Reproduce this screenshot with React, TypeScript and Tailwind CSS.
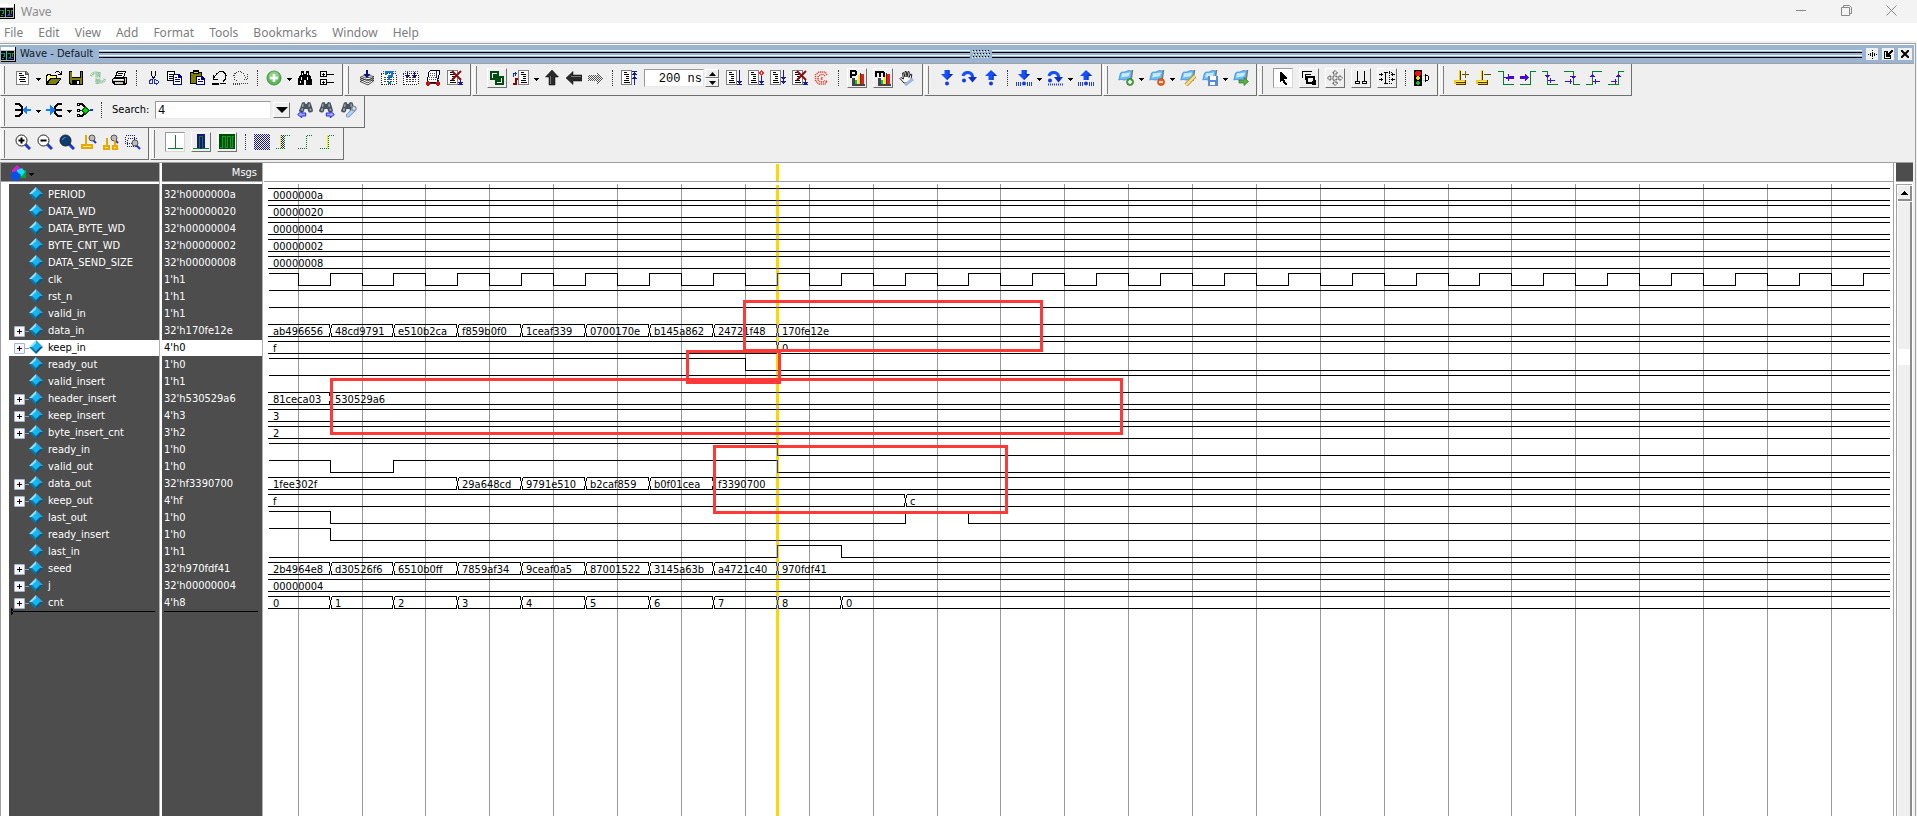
import { useState } from "react";
import type { ReactNode } from "react";

/* ------------------------------------------------------------------ */
/* Signals                                                             */
/* ------------------------------------------------------------------ */

type Signal = {
  name: string;
  value: string;
  expandable?: boolean;
  // Bus: [edge index, text] pairs; index -1 is the start of the view.
  bus?: [number, string][];
  // Bit: initial level followed by the x edges at which it toggles.
  bit?: { start: 0 | 1; toggles: number[] };
};

const ROW = 17;
const PERIOD = 63.88;
const FALL0 = 34.2;
const RISE0 = 66.1;
const FAR = 6000;

const rise = (n: number) => Math.floor(RISE0 + PERIOD * n);
const fall = (n: number) => Math.floor(FALL0 + PERIOD * n);

const clockToggles: number[] = [];
for (let n = 0; n < 90; n++) clockToggles.push(fall(n), rise(n));

const sequence = (words: string): [number, string][] =>
  words.split(" ").map((w, i) => [i - 1, w]);

const signals: Signal[] = [
  { name: "PERIOD", value: "32'h0000000a", bus: [[-1, "0000000a"]] },
  { name: "DATA_WD", value: "32'h00000020", bus: [[-1, "00000020"]] },
  { name: "DATA_BYTE_WD", value: "32'h00000004", bus: [[-1, "00000004"]] },
  { name: "BYTE_CNT_WD", value: "32'h00000002", bus: [[-1, "00000002"]] },
  { name: "DATA_SEND_SIZE", value: "32'h00000008", bus: [[-1, "00000008"]] },
  { name: "clk", value: "1'h1", bit: { start: 1, toggles: clockToggles } },
  { name: "rst_n", value: "1'h1", bit: { start: 1, toggles: [] } },
  { name: "valid_in", value: "1'h1", bit: { start: 1, toggles: [] } },
  {
    name: "data_in",
    value: "32'h170fe12e",
    expandable: true,
    bus: sequence("ab496656 48cd9791 e510b2ca f859b0f0 1ceaf339 0700170e b145a862 24721f48 170fe12e"),
  },
  { name: "keep_in", value: "4'h0", expandable: true, bus: [[-1, "f"], [7, "0"]] },
  { name: "ready_out", value: "1'h0", bit: { start: 1, toggles: [fall(7)] } },
  { name: "valid_insert", value: "1'h1", bit: { start: 1, toggles: [] } },
  { name: "header_insert", value: "32'h530529a6", expandable: true, bus: sequence("81ceca03 530529a6") },
  { name: "keep_insert", value: "4'h3", expandable: true, bus: [[-1, "3"]] },
  { name: "byte_insert_cnt", value: "3'h2", expandable: true, bus: [[-1, "2"]] },
  { name: "ready_in", value: "1'h0", bit: { start: 1, toggles: [rise(7)] } },
  { name: "valid_out", value: "1'h0", bit: { start: 1, toggles: [rise(0), rise(1), rise(7)] } },
  {
    name: "data_out",
    value: "32'hf3390700",
    expandable: true,
    bus: [[-1, "1fee302f"], [2, "29a648cd"], [3, "9791e510"], [4, "b2caf859"], [5, "b0f01cea"], [6, "f3390700"]],
  },
  { name: "keep_out", value: "4'hf", expandable: true, bus: [[-1, "f"], [9, "c"]] },
  { name: "last_out", value: "1'h0", bit: { start: 1, toggles: [rise(0), rise(9), rise(10)] } },
  { name: "ready_insert", value: "1'h0", bit: { start: 1, toggles: [rise(0)] } },
  { name: "last_in", value: "1'h1", bit: { start: 0, toggles: [rise(7), rise(8)] } },
  {
    name: "seed",
    value: "32'h970fdf41",
    expandable: true,
    bus: sequence("2b4964e8 d30526f6 6510b0ff 7859af34 9ceaf0a5 87001522 3145a63b a4721c40 970fdf41"),
  },
  { name: "j", value: "32'h00000004", expandable: true, bus: [[-1, "00000004"]] },
  { name: "cnt", value: "4'h8", expandable: true, bus: sequence("0 1 2 3 4 5 6 7 8 0") },
];

function tracePath(s: Signal, top: number): string {
  const hi = top + 1.5;
  const lo = top + 13.5;
  if (s.bit) {
    let level = s.bit.start;
    let d = `M5 ${level ? hi : lo}`;
    for (const x of s.bit.toggles) {
      level = level ? 0 : 1;
      d += `H${x + 0.5}V${level ? hi : lo}`;
    }
    return d + `H${FAR}`;
  }
  const bus = s.bus ?? [];
  let d = "";
  bus.forEach(([n], i) => {
    const last = i === bus.length - 1;
    const from = n < 0 ? 4 : rise(n) + 1.5;
    const to = last ? FAR : rise(bus[i + 1][0]) - 0.5;
    d += `M${from} ${hi}H${to}M${from} ${lo}H${to}`;
    if (n >= 0) d += `M${from} ${hi}v3l-1 1v4l1 1v3`;
    if (!last) d += `M${to} ${hi}v3l1 1v4l-1 1v3`;
  });
  return d;
}

function Traces({ stroke }: { stroke: string }) {
  return (
    <g fill="none" stroke={stroke} shapeRendering="crispEdges">
      {signals.map((s, i) => (
        <path key={s.name} d={tracePath(s, 3 + i * ROW)} />
      ))}
    </g>
  );
}

const marks = [
  { x: 66, y: 194, w: 793, h: 57 },
  { x: 422, y: 166, w: 95, h: 34 },
  { x: 479, y: 116, w: 300, h: 52 },
  { x: 449, y: 261, w: 295, h: 69 },
];

function WaveCanvas() {
  const grid = Array.from({ length: 90 }, (_, n) => fall(n));
  return (
    <svg className="mr-[3px] min-w-0 flex-1" role="img" aria-label="Waveforms" width="100%">
      <defs>
        <clipPath id="cursor-clip">
          <rect x="512" y="0" width="3" height={FAR} />
        </clipPath>
      </defs>
      <g fill="#999">
        {grid.map((x) => (
          <rect key={x} x={x} y="0" width="1" height={FAR} />
        ))}
      </g>
      <Traces stroke="#000" />
      <g fontSize="11" fill="#000">
        {signals.map((s, i) =>
          s.bus?.map(([n, text]) => (
            <text key={n} x={n < 0 ? 9 : rise(n) + 5} y={3 + i * ROW + 12}>
              {text}
            </text>
          ))
        )}
      </g>
      <rect x="512" y="1" width="3" height={FAR} fill="#ffd700" />
      <g clipPath="url(#cursor-clip)">
        <Traces stroke="#1a3cf0" />
      </g>
      <g fill="none" stroke="#ff3838" strokeWidth="3">
        {marks.map((m) => (
          <rect key={m.x} x={m.x + 1.5} y={m.y + 1.5} width={m.w - 3} height={m.h - 3} />
        ))}
      </g>
    </svg>
  );
}

/* ------------------------------------------------------------------ */
/* Icons                                                               */
/* ------------------------------------------------------------------ */

function Ico({ children, smooth }: { children: ReactNode; smooth?: boolean }) {
  return (
    <svg
      width="16"
      height="16"
      viewBox="0 0 16 16"
      fill="none"
      stroke="none"
      className="shrink-0"
      shapeRendering={smooth ? "auto" : "crispEdges"}
      aria-hidden="true"
    >
      {children}
    </svg>
  );
}

const AppIcon = () => (
  <svg width="15" height="15" viewBox="0 0 15 15" shapeRendering="crispEdges" aria-hidden="true">
    <path fill="#c0c0c0" d="M0 0h15v15H0z" />
    <path fill="#fff" d="M0 0h14v3H0z" />
    <path fill="#000" d="M0 4h13v9H0zM14 0h1v15h-1zM0 14h15v1H0z" />
    <path stroke="#0a9a4a" fill="none" d="M0 6.5h3.5v3H2M7 6.5h2.5v4H8M11 9.5v-3h2M1 11.5h2" />
    <path fill="#00d8e8" d="M5 4h1v9H5z" />
    <path fill="#4a20d0" d="M7 11h5v1H7z" />
  </svg>
);

const page = (
  <>
    <path fill="#808080" d="M0 0h11v15H0z" />
    <path fill="#fff" d="M1 1h9v13H1z" />
    <path fill="#000" d="M3 2h3v1H3zM3 4h5v1H3zM5 6h3v1H5zM5 8h3v1H5zM3 10h5v1H3zM3 12h6v1H3z" />
  </>
);

const NewDoc = () => (
  <Ico>
    <path fill="#808080" d="M1 1h10l3 3v11H1z" />
    <path fill="#fff" d="M2 2h8v3h3v9H2z" />
    <path fill="#555" d="M10 1h1v3h3v1h-4z" />
    <path fill="#000" d="M4 3h3v1H4zM4 5h5v1H4zM5 7h6v1H5zM4 9h6v1H4zM5 11h6v1H5z" />
  </Ico>
);
const Open = () => (
  <Ico>
    <path fill="#000" d="M0 5h1V4h4v1h6v3h4v1l-4 6H0zM9 2h1V1h3v1h1v1h1V1h1v4h-4V4h2V3h-1V2h-3v1H9z" />
    <path fill="#ffff80" d="M1 6h1V5h2v1h6v2H4l-3 4z" />
    <path fill="#808000" d="M5 9h9l-4 5H2z" />
  </Ico>
);
const Save = () => (
  <Ico>
    <path fill="#000" d="M1 1h14v14H2l-1-1z" />
    <path fill="#808000" d="M2 2h12v12H3l-1-1z" />
    <path fill="#f0f0f0" d="M4 1h8v7H4z" />
    <path fill="#000" d="M4 10h8v5H4zM12 1h1v7h-9V7h8z" />
    <path fill="#f0f0f0" d="M9 11h2v3H9z" />
  </Ico>
);
const Refresh = () => (
  <Ico smooth>
    <path
      stroke="#8cc498"
      strokeWidth="3"
      strokeDasharray="1 .6"
      d="M1 6c2-4 7-4 9-1M9 2v4H5M15 9c-2 4-7 4-9 1M7 14v-4h4"
    />
  </Ico>
);
const Print = () => (
  <Ico>
    <path fill="#000" d="M5 1h9v1l-2 5h2l1 1v5l-2 2H2l-2-2V9l3-2z" />
    <path fill="#fff" d="M6 2h7l-2 5H4z" />
    <path fill="#000" d="M6 3h5v1H6zM5 5h5v1H5z" />
    <path fill="#d0d0d0" d="M1 9h11v2H1zM13 8h1v5h-1zM3 12h8v2H3z" />
    <path fill="#fff" d="M2 9h9v1H2z" />
    <path fill="#e0d000" d="M8 12h3v1H8z" />
  </Ico>
);
const Cut = () => (
  <Ico>
    <path stroke="#000" d="M6.500 1v4l3 5M10.500 1v4l-3 5" />
    <path stroke="#1830d0" d="M7 9.500l-3 1v3h3v-4M9.500 9v4l2 1 1.500-1v-2l-3-1.500" />
  </Ico>
);
const Copy = () => (
  <Ico>
    <path fill="#000" d="M0 1h8v10H0z" />
    <path fill="#fff" d="M1 2h6v8H1z" />
    <path fill="#000" d="M2 4h4v1H2zM2 6h4v1H2zM2 8h4v1H2z" />
    <path fill="#000080" d="M6 4h6l3 3v8H6z" />
    <path fill="#fff" d="M7 5h4v3h3v6H7z" />
    <path fill="#000080" d="M8 7h2v1H8zM8 9h5v1H8zM8 11h5v1H8z" />
  </Ico>
);
const Paste = () => (
  <Ico>
    <path fill="#000" d="M1 2h12v12H1z" />
    <path fill="#808000" d="M2 3h10v10H2z" />
    <path fill="#000" d="M4 0h6v4H4z" />
    <path fill="#e8e040" d="M5 2h4v1H5z" />
    <path fill="#000080" d="M7 6h6l3 3v6H7z" />
    <path fill="#fff" d="M8 7h4v3h3v4H8z" />
    <path fill="#000080" d="M9 9h2v1H9zM9 11h5v1H9z" />
  </Ico>
);
const Undo = () => (
  <Ico>
    <path stroke="#000" d="M3 7.500l3-4 3-2h3l2 2 1 2-1 4-2 2M2.500 5v4H7" />
    <path fill="#000" d="M1 13h7v2H1zM9 13h6v1H9z" />
  </Ico>
);
const Redo = () => (
  <Ico>
    <path stroke="#444" strokeDasharray="1 1" d="M13 7.500l-3-4-3-2H4l-2 2-1 2 1 4 2 2M14.500 4v5H10M0 13.500h16M0 14.500h8" />
  </Ico>
);
const AddCircle = () => (
  <Ico smooth>
    <circle cx="8" cy="8" r="7" fill="#5fb55a" stroke="#3f9a3c" />
    <circle cx="8" cy="6.500" r="5" fill="#8fd088" />
    <path stroke="#fff" strokeWidth="2.500" d="M8 4v8M4 8h8" />
  </Ico>
);
const Binoculars = () => (
  <Ico>
    <path fill="#000" d="M4 1h3v3h2V1h3v3l2 3 1 3v5H9v-5H7v5H1v-5l1-3 2-3z" />
    <path fill="#fff" d="M5 3h1v2H5zM4 7h1v3H4zM10 3h1v2h-1zM10 7h1v3h-1zM3 11h1v2H3z" />
  </Ico>
);
const Tree = () => (
  <Ico>
    <path stroke="#000" fill="#fff" d="M1.500 1.500h6v5h-6zM1.500 9.500h6v5h-6z" />
    <path stroke="#000" d="M3 4.500h3M4.500 2.500v3M3 12.500h3M4.500 11v3M8 4.500h7M8 12.500h7" />
  </Ico>
);
const Compile = () => (
  <Ico smooth>
    <path fill="#fff" stroke="#222" strokeWidth=".8" d="M1 11.500l5-2.500 9 1.500-6 4.500zM1 9.500L6 7l9 1.500L9 13zM1 7.500L6 5l9 1.500L9 11z" />
    <path stroke="#101080" strokeWidth="2" d="M8 0v5" />
    <path fill="#101080" d="M4.500 4h7L8 8z" />
  </Ico>
);
const dots = (
  <>
    <path fill="#fff" d="M1 4h14v11H1z" />
    <path stroke="#222" strokeDasharray="1 1" d="M0 3.500h15M.5 4v11M15.500 5v10M1 14.500h14" />
    <path stroke="#444" strokeDasharray="2 1" d="M3 7.500h10M3 9.500h10M3 11.500h10" />
    <path stroke="#4a58b8" strokeDasharray="1 1" d="M2 1.500h13" />
  </>
);
const CompileAsk = () => (
  <Ico>
    {dots}
    <path stroke="#0878d8" strokeWidth="2" d="M5 5V2h6v4H8v4M7 13h3" />
  </Ico>
);
const CompileAll = () => (
  <Ico>
    {dots}
    <path fill="#101080" d="M4 2h1v3h2v1H6v1H5v1H4V7H3V6H2V5h2zM11 2h1v3h2v1h-1v1h-1v1h-1V7h-1V6H9V5h2z" />
  </Ico>
);
const Simulate = () => (
  <Ico>
    <path fill="#fff" stroke="#000" d="M4 2l2-1.500h8l1 1.500-3 10H2z" />
    <path stroke="#555" strokeDasharray="1 1" d="M5 3.500h8M5 5.500h8M4 7.500h8M4 9.500h7" />
    <path stroke="#1a2a90" d="M11.500 1v6l2 4" />
    <path fill="#c01010" d="M1 12h4v3H1zM11 12h4v3h-4zM2 11h2v5H2zM12 11h2v5h-2z" />
    <path stroke="#800" d="M5 13.500h6" />
  </Ico>
);
const Cross = () => <path stroke="#8b1010" strokeWidth="2" d="M5 1l9 9M14 1l-9 9" shapeRendering="auto" />;
const BreakSim = () => (
  <Ico>
    {page}
    <path fill="#1a1a90" d="M13 8h1v5h-1zM11 12h5v1h-5zM12 13h3v1h-3zM11 14h5v1h-5z" />
    <Cross />
  </Ico>
);
const Rings = () => (
  <Ico>
    <path stroke="#004d14" strokeWidth="2" d="M2 2h7v7H2zM7 7h7v7H7zM5 9V5h4M11 7v4H7" />
  </Ico>
);
const RestartDoc = () => (
  <Ico>
    <g transform="translate(5 0)">{page}</g>
    <path stroke="#1020d8" d="M.5 7V3.500H4M2.500 1.500v4" />
    <path stroke="#800" strokeWidth="2" d="M0 14h3V9h2" />
  </Ico>
);
const ArrowUp = () => (
  <Ico smooth>
    <path fill="#2a2a2a" stroke="#000" strokeWidth=".5" d="M8 0l6.500 7H11v8H5V7H1.500z" />
    <path stroke="#777" d="M6.500 6v8" />
  </Ico>
);
const ArrowLeft = () => (
  <Ico smooth>
    <path fill="#2a2a2a" stroke="#000" strokeWidth=".5" d="M0 8l7-6.500V5h9v6H7v3.500z" />
    <path stroke="#777" d="M5 6.500h10" />
  </Ico>
);
const ArrowRightDim = () => (
  <Ico>
    <defs>
      <pattern id="dither" width="2" height="2" patternUnits="userSpaceOnUse">
        <path fill="#555" d="M0 0h1v1H0zM1 1h1v1H1z" />
      </pattern>
    </defs>
    <path fill="url(#dither)" d="M16 8L9 2v3H0v6h9v3z" />
  </Ico>
);
const PageRun = ({ kind }: { kind: "restart" | "run" | "continue" | "all" | "kill" }) => (
  <Ico>
    {page}
    {kind === "restart" && <path fill="#1a1a90" d="M11 1h5v1h-5zM13 2h1v13h-1zM12 3h3v1h-3zM11 4h5v1h-5zM12 7h3v1h-3zM11 8h5v1h-5z" />}
    {kind === "run" && <path fill="#1a1a90" d="M13 0h1v11h2v1h-1v1h-1v1h-1v-1h-1v-1h-1v-1h2zM11 14h5v1h-5z" />}
    {kind === "continue" && (
      <>
        <path fill="#1a1a90" d="M13 5h1v6h2v1h-1v1h-1v1h-1v-1h-1v-1h-1v-1h2zM11 14h5v1h-5z" />
        <path stroke="#f03030" d="M13.500 1l2 2-2 2-2-2z" />
      </>
    )}
    {kind === "all" && <path fill="#1a1a90" d="M13 0h1v7h2v1h-1v1h-1v2h2v1h-1v1h-1v1h-1v-1h-1v-1h-1v-1h2V9h-1V8h-1V7h2z" />}
    {kind === "kill" && (
      <>
        <path fill="#1a1a90" d="M13 9h1v3h2v1h-1v1h-3v-1h-1v-1h2zM11 14h5v1h-5z" />
        <Cross />
      </>
    )}
  </Ico>
);
const Stop = () => (
  <Ico smooth>
    <path
      stroke="#e04838"
      strokeWidth="1.500"
      strokeDasharray="1.200 .7"
      d="M13 5l-2-3H5L1.500 5v6L5 14h6l2-3M11 6L9 4.500H6.500L4 7v3l2.500 2H9l2-1.500M8 7v2H6M13 11l-2 1"
    />
  </Ico>
);
const Profile = ({ mem }: { mem?: boolean }) => (
  <Ico>
    <path fill="#444" d="M3 8h3v6h10v2H3z" />
    <path fill="#10c030" d="M6 10h2v4H6z" />
    <path fill="#f8e800" d="M9 5h2v9H9z" />
    <path fill="#f01818" d="M12 4h3v10h-3z" />
    <path fill="#333" d="M11 3h1v11h-1z" />
    {mem ? (
      <path fill="#000" d="M0 1h9v1h1v5H8V3H6v4H4V3H2v4H0z" />
    ) : (
      <path fill="#000" fillRule="evenodd" d="M1 0h6v1h1v4H7v1H3v2H1zM3 2v2h3V2z" />
    )}
  </Ico>
);
const Hand = () => (
  <Ico smooth>
    <path
      fill="#fff"
      stroke="#222"
      d="M5 13L1 8.500 2 7.500 4.500 9 3.500 3l1-.5L6 7 6 1.500h1.300L8 7l1-5.500 1.200.3L10 7.500l1.800-3.500 1 .5L12 9.500 10 13z"
    />
    <path stroke="#9bb8e0" strokeWidth="3" d="M6 15l8-6" />
  </Ico>
);
const blueDown = (
  <>
    <path fill="#1450ff" d="M5.500 0h5v4H14L8 10 2 4h3.500z" />
    <path fill="#0a28b0" d="M9.500 0h1v4H14l-6 6V8.500l3.500-3.500h-2z" />
  </>
);
const Ball = () => <circle cx="8" cy="13.500" r="2" fill="#1438e8" />;
const bars = <path stroke="#2040d8" strokeDasharray="1 1" strokeWidth="4" d="M0 14h5M11 14h5" />;
const StepIn = ({ bar }: { bar?: boolean }) => (
  <Ico smooth>
    {blueDown}
    <Ball />
    {bar && bars}
  </Ico>
);
const StepOver = ({ bar }: { bar?: boolean }) => (
  <Ico smooth>
    <path stroke="#1450ff" strokeWidth="3" d="M2 6c1-4.500 8-5 9.500 0v3" />
    <path fill="#0a30c8" d="M7 7h9l-4.500 5.500z" />
    <circle cx="3" cy="10.500" r="2" fill="#1438e8" />
    {bar && <path stroke="#2040d8" strokeDasharray="1 1" strokeWidth="2" d="M1 14.500h15" />}
  </Ico>
);
const StepOut = ({ bar }: { bar?: boolean }) => (
  <Ico smooth>
    <path fill="#1450ff" d="M8 0l6 6h-3.500v4h-5V6H2z" />
    <path fill="#0a28b0" d="M9 1l5 5h-3.500v4h-1V5h2z" />
    <Ball />
    {bar && bars}
  </Ico>
);
const Flag = ({ kind }: { kind: "add" | "del" | "edit" | "save" | "go" }) => (
  <Ico smooth>
    <path stroke="#a0703a" strokeWidth="1.500" d="M14.500 0L13 11" />
    <path fill="#6cbcf4" stroke="#3a8cd8" strokeWidth=".8" d="M2.500 3c2-2 3 0 5.500-1.500S12 .8 14 1l-1.500 8c-2-.5-3 0-5 .8S3 8.500.8 10z" />
    <path fill="#c8ecff" d="M4 3.500c2-1 3 .5 4.500-.5L12 2.500l-1 3.500c-2 .8-5 .5-7.700 1.800z" />
    {kind === "add" && (
      <>
        <circle cx="12" cy="12" r="3.500" fill="#50a840" stroke="#2c7a28" strokeWidth=".7" />
        <path stroke="#fff" strokeWidth="1.500" d="M12 10v4M10 12h4" />
      </>
    )}
    {kind === "del" && (
      <>
        <circle cx="12" cy="12" r="3.500" fill="#f06018" stroke="#c04008" strokeWidth=".7" />
        <path stroke="#fff" strokeWidth="1.500" d="M10 12h4" />
      </>
    )}
    {kind === "edit" && (
      <>
        <path stroke="#b08020" strokeWidth="4" d="M6 15l9-9" />
        <path stroke="#f8dc80" strokeWidth="2.500" d="M6 15l9-9" />
      </>
    )}
    {kind === "save" && (
      <>
        <path fill="#5888d8" d="M6 6h10v10H6z" />
        <path fill="#fff" d="M8 6h6v4H8zM8 12h5v3H8z" />
      </>
    )}
    {kind === "go" && <path fill="#58b048" stroke="#2c7a28" strokeWidth=".7" d="M6 10h5V7.500l4.500 4L11 15.500V13H6z" />}
  </Ico>
);
const Pointer = () => (
  <Ico>
    <path fill="#000" d="M5 2h1l6 6v1H9l3 5v1h-2L7 10l-2 2z" />
  </Ico>
);
const ZoomBox = () => (
  <Ico>
    <path stroke="#000" d="M1.500 8V1.500H11M4 9.500V4.500h6" />
    <path stroke="#000" strokeWidth="2" d="M6 7h7v6H6z" />
    <path fill="#000" d="M11 11h4v4h-4zM14 10h1v5h-1z" />
  </Ico>
);
const Move = () => (
  <Ico smooth>
    <path
      stroke="#222"
      strokeDasharray="1 .6"
      d="M8 .5L10.500 3H9v4h4V5.500L15.500 8 13 10.500V9H9v4h1.500L8 15.500 5.500 13H7V9H3v1.500L.5 8 3 5.500V7h4V3H5.500z"
    />
  </Ico>
);
const TwoCursors = () => (
  <Ico>
    <path stroke="#000" fill="#fff" d="M4.500 1v10M2.500 11.500h4v2h-4zM11.500 1v10M9.500 11.500h4v2h-4z" />
  </Ico>
);
const EdgePan = () => (
  <Ico>
    <path stroke="#000" d="M0 4.500h4M0 9.500h4M2.500 3v3M2.500 8v3M6.500 2v12M12 4.500h4M12 9.500h4M13.500 3v3M13.500 8v3M5 13.500h4M5 2.500h4" />
    <path stroke="#000" strokeDasharray="1 1" d="M10.500 1v14M8 13.500h6M8 2.500h6" />
  </Ico>
);
const TrafficLight = () => (
  <Ico>
    <path fill="#000" d="M0 0h8v16H0z" />
    <path fill="#f01010" d="M2 1h4v1h1v3H6v1H2V5H1V2h1z" />
    <path fill="#f8d800" d="M3 6h2v1h1v2H5v1H3V9H2V7h1z" />
    <path fill="#10c020" d="M3 11h2v1h1v2H5v1H3v-1H2v-2h1z" />
    <path stroke="#000" fill="#fff" d="M11.500 4.500l3 2v3l-3 2z" />
    <path stroke="#80d8e8" d="M9 5.500h2M9 10.500h2" />
  </Ico>
);
const CursorTool = ({ minus }: { minus?: boolean }) => (
  <Ico>
    <path fill="#f8cc00" d="M5 0h2v10h4v4H0v-4h5z" />
    <path fill="#ffe9a0" d="M2 11h8v1H2z" />
    <path fill="#4a3a00" d="M6 1h1v9H6zM2 12h9v1H2zM11 10h1v4h-1zM2 14h10v1H2z" />
    <path fill="#5a4400" d="M8 4h7v1H8z" />
    {!minus && <path fill="#8a6a00" d="M11 1h1v7h-1z" />}
  </Ico>
);
const EDGES = {
  prev: ["M0 1.500h5.500v13H16", "M6 7h4V4h1v2h5v3h-5v2h-1V9H8V8H6z"],
  next: ["M0 14.500h10.500V1.500H16", "M0 6h5V4h1v1h1v1h1v1h1v1H8v1H7v1H6v1H5V9H0z"],
  prevFall: ["M0 1.500h5.500v13H16", "M3 5h5v1H7v1H6v1H5V7H4V6H3zM6 10h2V8h1v2h4v1H9v2H8v-2H6z"],
  nextFall: ["M0 1.500h9.500v13H16", "M6 6h6v1h-1v1h-1v1H9V8H8V7H6zM1 11h5V9h1v2h1v1H7v2H6v-2H1z"],
  prevRise: ["M0 14.500h6.500V1.500H16", "M4 7V6h1V5h1V4h1v1h1v1h1v1zM7 11h2V9h1v2h4v1h-4v2H9v-2H7z"],
  nextRise: ["M0 14.500h10.500V1.500H16", "M8 7V6h1V5h1V4h1v1h1v1h1v1zM3 11h4V9h1v2h1v1H8v2H7v-2H3z"],
} as const;
const EdgeIcon = ({ kind }: { kind: keyof typeof EDGES }) => (
  <Ico>
    <path stroke="#00802b" d={EDGES[kind][0]} />
    <path fill="#4408d8" d={EDGES[kind][1]} />
  </Ico>
);
const Driver = ({ into }: { into?: boolean }) => (
  <Ico>
    {into ? (
      <>
        <path stroke="#000" strokeWidth="2" d="M16 2h-4l-3 3v6l3 3h4M10 8h6" />
        <path fill="#1080ff" d="M0 7h4V3l5 5-5 5V9H0z" />
      </>
    ) : (
      <>
        <path stroke="#000" strokeWidth="2" d="M0 2h4l3 3v6l-3 3H0M0 8h6" />
        <path fill="#1080ff" d="M16 7h-4V3L7 8l5 5V9h4z" />
      </>
    )}
  </Ico>
);
const Expand = () => (
  <Ico>
    <path stroke="#000" strokeWidth="2" d="M3 2h2l3 3v6l-3 3H3" />
    <path stroke="#000" d="M3 8.500h4" />
    <path fill="#fff" stroke="#000" d="M.5 1.500h2v2h-2zM.5 7.500h2v2h-2zM.5 12.500h2v2h-2z" />
    <path fill="#00e010" stroke="#006010" d="M8.500 5l3.500 3.500L8.500 12 5 8.500z" />
    <path stroke="#1030e0" strokeWidth="2" d="M13 8h3" />
  </Ico>
);
const SearchBin = ({ kind }: { kind: "prev" | "next" | "opts" }) => (
  <Ico smooth>
    <g transform={kind === "prev" ? "translate(1 -1)" : "translate(-1 -1)"}>
      <path fill="#4a545e" d="M4 1.500l2.500-.5L7.500 3h1L10 1l2.500.5L14 6l1 3.500c0 2-4 3-5 .5L9.500 8h-3L6 10c-1 2.500-5 1.500-5-.5L2.500 6z" />
      <path fill="#a4b2be" d="M4.500 3l1-.5v3L4 6zM10.500 3l1-.5.5 3-1.500.5zM3 8l1.500-1 .5 2.500-1.500.5zM11.500 8l1.500-.5.5 2-1.500.5z" />
    </g>
    {kind === "prev" && <path fill="#98a8ff" stroke="#2424e0" d="M.7 12.500l4-3.500v2h4v3h-4v1.800z" />}
    {kind === "next" && <path fill="#98a8ff" stroke="#2424e0" d="M15.300 12.500l-4-3.500v2h-4v3h4v1.800z" />}
    {kind === "opts" && (
      <>
        <path stroke="#6c8cc8" strokeWidth="4" strokeLinecap="round" d="M7 13.500L12 8.500" />
        <path stroke="#b4d0f8" strokeWidth="2.500" strokeLinecap="round" d="M7 13.500L12 8.500" />
        <circle cx="13" cy="6.500" r="2" stroke="#8a98a8" strokeWidth="1.500" fill="#efefef" />
      </>
    )}
  </Ico>
);
const Lens = ({ kind }: { kind: "in" | "out" | "full" }) => (
  <Ico smooth>
    <path stroke="#2038c8" strokeWidth="3" d="M10 10l5 5" />
    <circle cx="6.500" cy="6.500" r="5.500" fill={kind === "full" ? "#0c3c70" : "#fff"} stroke="#222" />
    {kind === "in" && <path stroke="#000" strokeWidth="2" d="M3.500 6.500h6M6.500 3.500v6" />}
    {kind === "out" && <path stroke="#000" strokeWidth="2" d="M3.500 6.500h6" />}
    {kind === "full" && <path stroke="#58a0d8" d="M3.500 6a3 3 0 0 1 3-2.500" />}
  </Ico>
);
const ZoomCursor = ({ two }: { two?: boolean }) => (
  <Ico>
    <path stroke="#2038c8" strokeWidth="2" d="M12 6l3 3" shapeRendering="auto" />
    <circle cx="11" cy="4" r="3" fill="#bbb" stroke="#555" shapeRendering="auto" />
    <path fill="#e8a800" d={two ? "M3 4h2v7h2v5H0v-5h3zM11 6h2v5h2v5H9v-5h2z" : "M4 1h2v9h6v5H0v-5h4z"} />
    <path fill="#ffe9a0" d={two ? "M2 13h3v1H2zM11 13h2v1h-2z" : "M2 12h8v1H2z"} />
  </Ico>
);
const ZoomRange = () => (
  <Ico>
    <path stroke="#1a1a90" strokeDasharray="1 1" d="M.5 1.500h9v8h-9zM2.500 4.500h9v8h-9z" />
    <path stroke="#2038c8" strokeWidth="2" d="M11 11l4 4" shapeRendering="auto" />
    <circle cx="10" cy="9" r="3" fill="#bbb" stroke="#555" shapeRendering="auto" />
  </Ico>
);
const GreenCursor = () => (
  <Ico>
    <path stroke="#00802b" d="M8.500 1v13M1 14.500h15" />
  </Ico>
);
const BlueBand = () => (
  <Ico>
    <path fill="#181880" d="M4 0h8v15H4z" />
    <path stroke="#00802b" d="M0 14.500h6.500v-12h3v12H16" />
  </Ico>
);
const GreenBand = () => (
  <Ico>
    <path fill="#004d00" d="M0 0h16v15H0z" />
    <path stroke="#00a038" d="M1 13.500h2.500v-11h3v11h2v-11h3v11h2v-11H15" />
  </Ico>
);
const DitherBox = () => (
  <Ico>
    <defs>
      <pattern id="dither-blue" width="2" height="2" patternUnits="userSpaceOnUse">
        <path fill="#181880" d="M0 0h1v1H0zM1 1h1v1H1z" />
      </pattern>
    </defs>
    <path fill="url(#dither-blue)" d="M0 0h16v16H0z" />
  </Ico>
);
const DitherEdge = ({ kind }: { kind: 0 | 1 | 2 }) => (
  <Ico>
    {kind === 0 && <path fill="url(#dither-blue)" d="M4 1h5v14H4z" />}
    {kind !== 1 && <path fill="#f0f000" d={kind === 0 ? "M4 1h1v14H4z" : "M7 1h1v14H7z"} />}
    <path stroke="#00802b" strokeDasharray="1 1" d="M0 14.500h8.500v-13H15" />
  </Ico>
);

/* ------------------------------------------------------------------ */
/* Toolbar parts                                                       */
/* ------------------------------------------------------------------ */

function Group({ label, children }: { label: string; children: ReactNode }) {
  return (
    <div
      role="toolbar"
      aria-label={label}
      className="mr-px flex h-8 items-center border-r border-b border-[#6f6f6f] border-l border-l-white pr-1 pb-[3px]"
    >
      <div className="mt-[3px] mr-[7px] ml-px h-7 w-[3px] border-r border-l border-r-[#808080] border-l-white" />
      {children}
    </div>
  );
}
const Tool = ({ label, children }: { label: string; children: ReactNode }) => (
  <button type="button" aria-label={label} className="flex h-5 w-[22px] shrink-0 items-center justify-center">
    {children}
  </button>
);
const Raised = ({ label, pressed, children }: { label: string; pressed?: boolean; children: ReactNode }) => (
  <button
    type="button"
    aria-label={label}
    className={
      pressed
        ? "mx-[3px] flex size-5 shrink-0 items-center justify-center border border-[#d8d8d8] border-t-[#999] border-l-[#999] bg-white"
        : "mx-[3px] flex size-5 shrink-0 items-center justify-center border border-white border-r-[#707070] border-b-[#707070]"
    }
  >
    {children}
  </button>
);
const Caret = ({ label }: { label: string }) => (
  <button type="button" aria-label={label} className="flex h-5 w-[9px] shrink-0 items-center justify-center">
    <svg width="5" height="3" viewBox="0 0 5 3" className="mt-[2px]" shapeRendering="crispEdges" aria-hidden="true">
      <path d="M0 0h5v1H4v1H3v1H2V2H1V1H0z" />
    </svg>
  </button>
);
const Sep = () => (
  <div className="flex w-[11px] shrink-0 justify-center">
    <div className="h-4 border-l border-dotted border-[#333]" />
  </div>
);

const Diamond = () => (
  <svg width="14" height="14" viewBox="0 0 14 14" className="shrink-0" aria-hidden="true">
    <path fill="#8fe4ff" d="M7 0L0 7h3.500L7 3.500z" />
    <path fill="#28a8e0" d="M7 0l7 7h-3.500L7 3.500z" />
    <path fill="#0878a8" d="M0 7l7 7v-3.500L3.500 7z" />
    <path fill="#045a80" d="M14 7l-7 7v-3.500L10.500 7z" />
    <path fill="#10b8f8" d="M7 3l4 4-4 4-4-4z" />
  </svg>
);

function NameRow({ signal, selected, onSelect }: { signal: Signal; selected: boolean; onSelect: () => void }) {
  return (
    <li
      onClick={onSelect}
      className={selected ? "mb-px flex h-4 cursor-default bg-white text-black" : "mb-px flex h-4 cursor-default text-white"}
    >
      <span className="flex w-5 shrink-0 pt-[3px] pl-[5px]">
        {signal.expandable && (
          <>
            <button
              type="button"
              aria-label={`Expand ${signal.name}`}
              className="flex size-[11px] shrink-0 items-center justify-center rounded-[1px] border border-[#a8b4cc] bg-[#f4f6fa]"
            >
              <svg width="9" height="9" viewBox="0 0 9 9" className="shrink-0" shapeRendering="crispEdges" aria-hidden="true">
                <path d="M2 4h5v1H2zM4 2h1v5H4z" />
              </svg>
            </button>
            <i className="mt-[5px] h-px w-1 shrink-0 bg-[#a0a0a0]" />
          </>
        )}
      </span>
      <Diamond />
      <span className="pl-[5px] leading-[15px] whitespace-nowrap">{signal.name}</span>
    </li>
  );
}

const menus = ["File", "Edit", "View", "Add", "Format", "Tools", "Bookmarks", "Window", "Help"];

const Stripe = () => (
  <div className="flex flex-1 flex-col gap-[2px]">
    <div className="h-[3px] border-t border-b border-t-[#e4fbff] border-b-black" />
    <div className="h-[3px] border-t border-b border-t-[#e4fbff] border-b-black" />
  </div>
);

export default function App() {
  const [selected, setSelected] = useState("keep_in");
  return (
    <div className="flex min-h-screen flex-col bg-[#efefef] font-['DejaVu_Sans_Condensed','DejaVu_Sans',sans-serif] text-[11px] leading-4 text-black">
      <header className="flex h-[23px] items-center bg-[#f3f3f3] font-['Noto_Sans',sans-serif] text-[12px] text-[#8c8c8c]">
        <AppIcon />
        <h1 className="flex-1 pl-[6px]">Wave</h1>
        <div className="flex items-center gap-[34px] pr-5 pb-[2px]">
          <button type="button" aria-label="Minimize">
            <svg width="11" height="11" viewBox="0 0 11 11" aria-hidden="true">
              <path stroke="#888" d="M0 5.500h10" />
            </svg>
          </button>
          <button type="button" aria-label="Restore">
            <svg width="11" height="11" viewBox="0 0 11 11" fill="none" stroke="#888" aria-hidden="true">
              <path d="M.5 2.500h8v8h-8zM2.500 2.500v-2h6l2 2v6h-2" />
            </svg>
          </button>
          <button type="button" aria-label="Close">
            <svg width="11" height="11" viewBox="0 0 11 11" stroke="#888" aria-hidden="true">
              <path d="M.5.500l10 10M10.500.500l-10 10" />
            </svg>
          </button>
        </div>
      </header>

      <nav className="flex h-[18px] items-center gap-[15px] bg-white pt-[2px] pl-1 font-['Noto_Sans',sans-serif] text-[12px] text-[#7d7d7d]">
        {menus.map((m) => (
          <button type="button" key={m}>
            {m}
          </button>
        ))}
      </nav>

      <main className="mt-[2px] mr-px flex flex-1 flex-col border-t border-r border-[#a0a0a0]">
        <div className="mr-px flex h-5 items-center border-t border-b border-t-white border-b-[#a0a0a0] bg-[#9ab4d2] pl-px">
          <AppIcon />
          <h2 className="pr-[6px] pl-1 text-[#101828]">Wave - Default</h2>
          <Stripe />
          <svg width="22" height="8" className="shrink-0" shapeRendering="crispEdges" aria-hidden="true">
            <path stroke="#e4fbff" strokeDasharray="1 2" d="M2 1.500h18M3 4.500h17M2 7.500h18" />
            <path stroke="#000" strokeDasharray="1 2" d="M3 .5h17M4 3.500h16M3 6.500h17" />
          </svg>
          <Stripe />
          <div className="flex gap-1 pr-[2px] pl-1">
            <button type="button" aria-label="Dock" className="flex size-3 items-center justify-center bg-[#f0f0f0]">
              <svg width="9" height="9" viewBox="0 0 9 9" shapeRendering="crispEdges" aria-hidden="true">
                <path stroke="#000" strokeDasharray="1 1" d="M4.500 0v9M0 4.500h9M2 3.500h5M2 5.500h5" />
              </svg>
            </button>
            <button type="button" aria-label="Undock" className="flex size-3 items-center justify-center bg-[#f0f0f0]">
              <svg width="9" height="9" viewBox="0 0 9 9" fill="none" shapeRendering="crispEdges" aria-hidden="true">
                <path stroke="#000" d="M4 1.500H.5v7h6V6" />
                <path stroke="#000" strokeWidth="2" d="M9 0L3 6M3 2v4h4" />
              </svg>
            </button>
            <button type="button" aria-label="Close pane" className="flex h-3 w-[14px] items-center justify-center bg-[#f0f0f0]">
              <svg width="8" height="8" viewBox="0 0 8 8" aria-hidden="true">
                <path stroke="#000" strokeWidth="2" d="M0 0l8 8M8 0L0 8" />
              </svg>
            </button>
          </div>
        </div>

        <div className="flex flex-wrap">
          <Group label="Standard">
            <Tool label="New"><NewDoc /></Tool>
            <Caret label="New options" />
            <Tool label="Open"><Open /></Tool>
            <Tool label="Save"><Save /></Tool>
            <Tool label="Reload"><Refresh /></Tool>
            <Tool label="Print"><Print /></Tool>
            <Sep />
            <Tool label="Cut"><Cut /></Tool>
            <Tool label="Copy"><Copy /></Tool>
            <Tool label="Paste"><Paste /></Tool>
            <Tool label="Undo"><Undo /></Tool>
            <Tool label="Redo"><Redo /></Tool>
            <Sep />
            <Tool label="Add selected"><AddCircle /></Tool>
            <Caret label="Add options" />
            <Tool label="Find"><Binoculars /></Tool>
            <Tool label="Collapse all"><Tree /></Tool>
          </Group>
          <Group label="Compile">
            <Tool label="Compile"><Compile /></Tool>
            <Tool label="Compile out-of-date"><CompileAsk /></Tool>
            <Tool label="Compile all"><CompileAll /></Tool>
            <Tool label="Simulate"><Simulate /></Tool>
            <Tool label="Break"><BreakSim /></Tool>
          </Group>
          <Group label="Simulate">
            <Raised label="Environment"><Rings /></Raised>
            <Tool label="Restart"><RestartDoc /></Tool>
            <Caret label="Restart options" />
            <Tool label="Up"><ArrowUp /></Tool>
            <Tool label="Back"><ArrowLeft /></Tool>
            <Tool label="Forward"><ArrowRightDim /></Tool>
            <Sep />
            <Tool label="Restart simulation"><PageRun kind="restart" /></Tool>
            <input
              aria-label="Run length"
              defaultValue="200 ns"
              className="ml-1 h-[18px] w-[60px] border border-[#e8e8e8] border-t-[#999] border-l-[#999] bg-white pt-[2px] pr-px text-right font-['Liberation_Mono',monospace] text-[12px]"
            />
            <div className="mr-1 ml-px flex w-[14px] flex-col">
              <button type="button" aria-label="Increase" className="flex h-[9px] items-center justify-center border border-white border-r-[#707070] border-b-[#707070]">
                <svg width="7" height="4" viewBox="0 0 7 4" aria-hidden="true"><path d="M3.500 0L7 4H0z" /></svg>
              </button>
              <button type="button" aria-label="Decrease" className="flex h-[9px] items-center justify-center border border-white border-r-[#707070] border-b-[#707070]">
                <svg width="7" height="4" viewBox="0 0 7 4" aria-hidden="true"><path d="M3.500 4L7 0H0z" /></svg>
              </button>
            </div>
            <Tool label="Run"><PageRun kind="run" /></Tool>
            <Tool label="Continue run"><PageRun kind="continue" /></Tool>
            <Tool label="Run all"><PageRun kind="all" /></Tool>
            <Tool label="Kill"><PageRun kind="kill" /></Tool>
            <Tool label="Stop"><Stop /></Tool>
            <Sep />
            <Raised label="Performance profile"><Profile /></Raised>
            <Raised label="Memory profile"><Profile mem /></Raised>
            <Tool label="Edit breakpoints"><Hand /></Tool>
          </Group>
          <Group label="Step">
            <Tool label="Step into"><StepIn /></Tool>
            <Tool label="Step over"><StepOver /></Tool>
            <Tool label="Step out"><StepOut /></Tool>
            <Sep />
            <Tool label="Step into current"><StepIn bar /></Tool>
            <Caret label="Step into options" />
            <Tool label="Step over current"><StepOver bar /></Tool>
            <Caret label="Step over options" />
            <Tool label="Step out current"><StepOut bar /></Tool>
          </Group>
          <Group label="Bookmarks">
            <Tool label="Add bookmark"><Flag kind="add" /></Tool>
            <Caret label="Add bookmark options" />
            <Tool label="Delete bookmark"><Flag kind="del" /></Tool>
            <Caret label="Delete bookmark options" />
            <Tool label="Edit bookmarks"><Flag kind="edit" /></Tool>
            <Tool label="Save bookmarks"><Flag kind="save" /></Tool>
            <Caret label="Save bookmark options" />
            <Tool label="Go to bookmark"><Flag kind="go" /></Tool>
          </Group>
          <Group label="Mouse mode">
            <Raised label="Select mode" pressed><Pointer /></Raised>
            <Raised label="Zoom mode"><ZoomBox /></Raised>
            <Raised label="Pan mode"><Move /></Raised>
            <Raised label="Two cursor mode"><TwoCursors /></Raised>
            <Raised label="Edit mode"><EdgePan /></Raised>
            <Sep />
            <Tool label="Stop drawing"><TrafficLight /></Tool>
          </Group>
          <Group label="Wave cursor">
            <Tool label="Insert cursor"><CursorTool /></Tool>
            <Tool label="Delete cursor"><CursorTool minus /></Tool>
            <Tool label="Previous transition"><EdgeIcon kind="prev" /></Tool>
            <Tool label="Next transition"><EdgeIcon kind="next" /></Tool>
            <Tool label="Previous falling edge"><EdgeIcon kind="prevFall" /></Tool>
            <Tool label="Next falling edge"><EdgeIcon kind="nextFall" /></Tool>
            <Tool label="Previous rising edge"><EdgeIcon kind="prevRise" /></Tool>
            <Tool label="Next rising edge"><EdgeIcon kind="nextRise" /></Tool>
          </Group>
        </div>

        <div className="flex flex-wrap">
          <Group label="Search">
            <Tool label="Show drivers"><Driver /></Tool>
            <Caret label="Driver options" />
            <Tool label="Show readers"><Driver into /></Tool>
            <Caret label="Reader options" />
            <Tool label="Expand net"><Expand /></Tool>
            <Sep />
            <label htmlFor="search" className="w-12 pl-[5px]">Search:</label>
            <input
              id="search"
              defaultValue="4"
              className="h-[18px] w-[116px] border border-[#e8e8e8] border-t-[#999] border-l-[#999] bg-white pt-[2px] pl-[2px] font-['Liberation_Mono',monospace] text-[12px]"
            />
            <button
              type="button"
              aria-label="Search history"
              className="mr-1 ml-[2px] flex h-4 w-[17px] items-center justify-center border border-white border-r-[#707070] border-b-[#707070]"
            >
              <svg width="12" height="6" viewBox="0 0 12 6" aria-hidden="true"><path d="M0 0h12L6 6z" /></svg>
            </button>
            <Tool label="Search backward"><SearchBin kind="prev" /></Tool>
            <Tool label="Search forward"><SearchBin kind="next" /></Tool>
            <Tool label="Search options"><SearchBin kind="opts" /></Tool>
          </Group>
        </div>

        <div className="flex flex-wrap">
          <Group label="Zoom">
            <Tool label="Zoom in"><Lens kind="in" /></Tool>
            <Tool label="Zoom out"><Lens kind="out" /></Tool>
            <Tool label="Zoom full"><Lens kind="full" /></Tool>
            <Tool label="Zoom in on cursor"><ZoomCursor /></Tool>
            <Tool label="Zoom between cursors"><ZoomCursor two /></Tool>
            <Tool label="Zoom range"><ZoomRange /></Tool>
          </Group>
          <Group label="Expanded time">
            <Raised label="Expanded time off" pressed><GreenCursor /></Raised>
            <Raised label="Expanded time deltas"><BlueBand /></Raised>
            <Raised label="Expanded time events"><GreenBand /></Raised>
            <Sep />
            <Tool label="Expand all time"><DitherBox /></Tool>
            <Tool label="Expand time at cursor"><DitherEdge kind={0} /></Tool>
            <Tool label="Collapse all time"><DitherEdge kind={1} /></Tool>
            <Tool label="Collapse time at cursor"><DitherEdge kind={2} /></Tool>
          </Group>
        </div>

        <section className="mt-[2px] mr-[2px] flex flex-1 border-t border-l border-[#a0a0a0] bg-white">
          <div className="flex w-[159px] shrink-0 flex-col border-r border-[#b0b0b0]">
            <div className="flex h-[19px] items-center border-b border-[#a0a0a0] bg-[#4d4d4d] pt-[2px] pl-[10px]">
              <svg width="16" height="16" viewBox="0 0 16 16" aria-hidden="true">
                <path fill="#d020d0" d="M6 0l5 5-3 2H1V5z" />
                <path fill="#10a040" d="M11 5h4v8H9z" />
                <path fill="#10e0f8" d="M6 5l5-2 3 4-3 4-5-1z" />
                <path fill="#0850e8" d="M5 6l5 4-3 6H2L0 12V8z" />
              </svg>
              <Caret label="Column options" />
            </div>
            <ul className="mt-[2px] ml-2 flex-1 bg-[#4d4d4d] pt-[3px]">
              {signals.map((s) => (
                <NameRow key={s.name} signal={s} selected={s.name === selected} onSelect={() => setSelected(s.name)} />
              ))}
              <li aria-hidden="true" className="-mt-1">
                <svg width="146" height="7" viewBox="0 0 146 7" shapeRendering="crispEdges">
                  <path stroke="#000" fill="none" d="M5 3.500h141M2.500 0v7l2-3.500z" />
                </svg>
              </li>
            </ul>
          </div>
          <div className="ml-[2px] flex w-[101px] shrink-0 flex-col border-r border-[#b0b0b0]">
            <div className="flex h-[19px] items-center justify-end border-b border-[#a0a0a0] bg-[#4d4d4d] pt-[2px] pr-[5px] text-white">Msgs</div>
            <ul className="mt-[2px] flex-1 bg-[#4d4d4d] pt-[3px]">
              {signals.map((s) => (
                <li
                  key={s.name}
                  className={
                    s.name === selected
                      ? "mb-px h-4 bg-white pl-[2px] leading-[15px] text-black"
                      : "mb-px h-4 pl-[2px] leading-[15px] text-white"
                  }
                >
                  {s.value}
                </li>
              ))}
              <li aria-hidden="true" className="-mt-px mr-1 ml-[2px] h-px bg-black" />
            </ul>
          </div>
          <div className="ml-px flex min-w-0 flex-1 flex-col border-r border-[#a0a0a0]">
            <div className="h-[19px] border-b border-[#a0a0a0]">
              <div className="ml-[512px] h-full pt-px">
                <div className="h-full w-[3px] bg-[#ffd700]" />
              </div>
            </div>
            <div className="mt-[2px] flex flex-1">
              <WaveCanvas />
            </div>
          </div>
          <div className="ml-[2px] flex w-[17px] shrink-0 flex-col">
            <div className="h-[19px] border-b border-[#a0a0a0] bg-[#4d4d4d]" />
            <div className="mt-[2px] mr-px flex flex-1 flex-col border-t border-l border-[#a0a0a0] pt-px pl-px">
              <button
                type="button"
                aria-label="Scroll up"
                className="flex h-[15px] items-center justify-center border-r-2 border-b-2 border-[#8c8c8c] bg-[#efefef]"
              >
                <svg width="7" height="4" viewBox="0 0 7 4" shapeRendering="crispEdges" aria-hidden="true">
                  <path d="M3 0h1v1h1v1h1v1h1v1H0V3h1V2h1V1h1z" />
                </svg>
              </button>
              <div className="mt-px flex flex-1 flex-col border-r-2 border-[#8c8c8c] bg-[#efefef]">
                <div className="mt-[147px] h-4 bg-white" />
              </div>
            </div>
          </div>
        </section>
      </main>
    </div>
  );
}
